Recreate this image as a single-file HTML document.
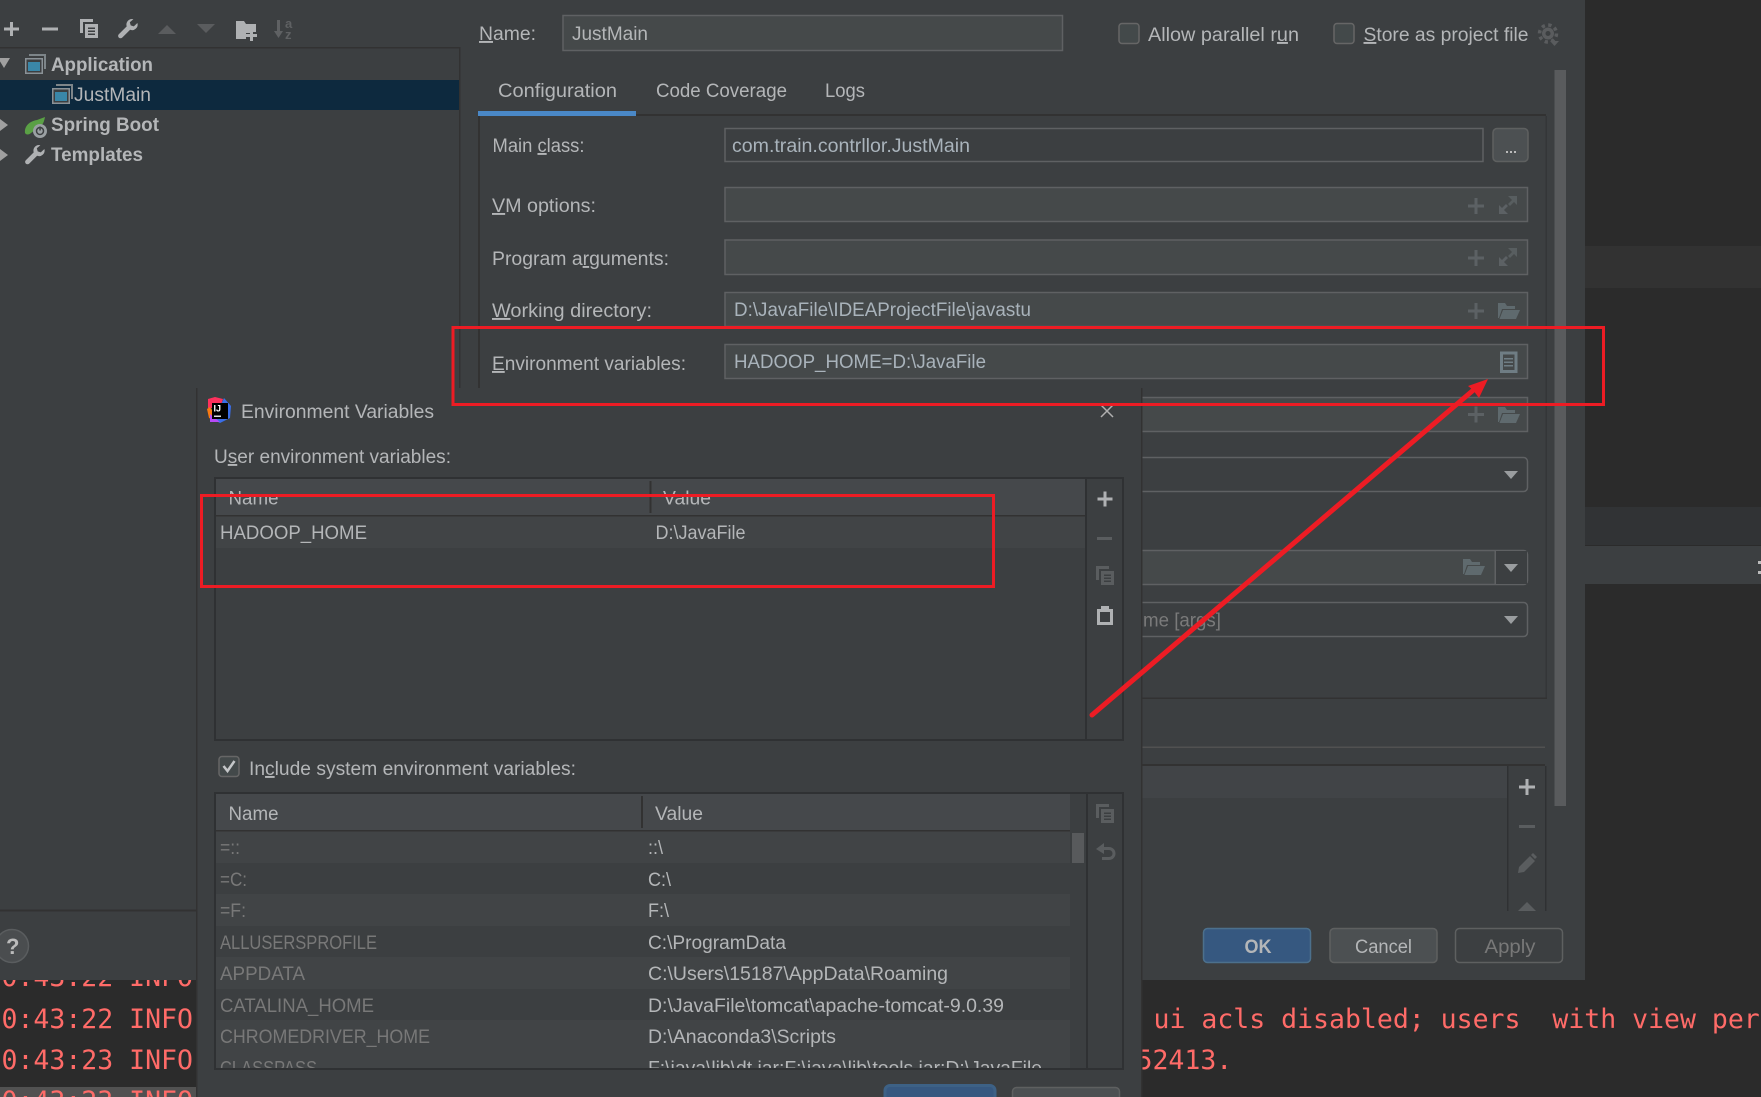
<!DOCTYPE html>
<html><head><meta charset="utf-8"><title>Run Configuration</title>
<style>
html,body{margin:0;padding:0;background:#2b2b2b;width:1761px;height:1097px;overflow:hidden}
svg{display:block;font-family:"Liberation Sans",sans-serif;font-size:19px}
text{fill:#b4b6b8;white-space:pre}
.m{font-family:"DejaVu Sans Mono","Liberation Mono",monospace;font-size:26.5px;fill:#ff6b68}
.b{font-weight:bold}
.v{fill:#a9b3bb}
.d{fill:#787878}
.u{text-decoration:underline}
</style></head><body>
<svg width="1761" height="1097" viewBox="0 0 1761 1097" xmlns="http://www.w3.org/2000/svg">
<defs>
<g id="wrench"><path d="M14 0a5.6 5.6 0 0 0-5.3 7.4L.8 15.2a2.4 2.4 0 0 0 3.4 3.4l7.9-7.8A5.6 5.6 0 0 0 19.4 4l-3.6 3.4-3.1-1-.9-3.1L15.4.2A6 6 0 0 0 14 0z"/></g>
<g id="copy"><path d="M0 0h13v3H3v11H0z"/><path fill-rule="evenodd" d="M5 5h13v14H5zM8 8.500v1.500h7V8.500zM8 11.500V13h7v-1.500zM8 14.500V16h7v-1.500z"/></g>
<g id="folder"><path d="M1 0h7l2 3h8v3H5L2 15H1z"/><path d="M6 7h17l-4 9H2.500z"/></g>
<g id="expand"><path d="M9 0h9v9l-3-3-4 4-2-2 4-4z" opacity=".85"/><path d="M0 18V9l3 3 4-4 2 2-4 4 4 4z"/></g>
<g id="app"><path d="M4 0h17v15h-2V2H4z" fill="#7d8589"/><path d="M0 4h18v16H0z" fill="#8a9297"/><rect x="1.500" y="5.500" width="15" height="13" fill="#3c3f41"/><rect x="3" y="8" width="12" height="9" fill="#3a87a8"/></g>
<g id="arrow"><path d="M-7-4H7L0 4z"/></g>
</defs>

<!-- editor background -->
<rect width="1761" height="1097" fill="#2b2b2b"/>
<rect x="1585" y="246" width="176" height="42" fill="#323232"/>
<rect x="1585" y="507" width="176" height="38" fill="#313335"/>
<rect x="1585" y="546" width="176" height="38" fill="#3c3f41"/>
<rect x="1758" y="561" width="3" height="3" fill="#bbb"/><rect x="1758" y="571" width="3" height="3" fill="#bbb"/>
<rect x="0" y="1087" width="197" height="10" fill="#515151"/>
<text class="m" x="1.500" y="986">0:43:22 INFO</text>
<text class="m" x="1.500" y="1028">0:43:22 INFO</text>
<text class="m" x="1.500" y="1069">0:43:23 INFO</text>
<text class="m" x="1.500" y="1110">0:43:23 INFO</text>
<text class="m" x="1153.500" y="1028">ui acls disabled; users  with view permissions</text>
<text class="m" x="1136.500" y="1069">52413.</text>

<!-- main dialog -->
<rect width="1585" height="980" fill="#3c3f41"/>
<g fill="#afb1b3">
<rect x="4" y="27.500" width="15" height="3"/><rect x="10" y="22" width="3" height="14"/>
<rect x="42" y="27.500" width="16" height="3"/>
<use href="#copy" x="80" y="19"/>
<use href="#wrench" x="118" y="19"/>
<path d="M236 21h8l2 3h10v8h-6v1h-4v6h-10z"/><rect x="246" y="34" width="11" height="3"/><rect x="250" y="30" width="3" height="11"/>
</g>
<path d="M158 34l9-9 9 9zM197 24h18l-9 9z" fill="#5a5c5e"/>
<g fill="#5f6163"><rect x="277" y="20" width="3" height="14"/><path d="M274 31h9l-4.500 7z"/></g>
<text x="285" y="28" font-size="13" class="b" style="fill:#5f6163">a</text><text x="285" y="39" font-size="13" class="b" style="fill:#5f6163">z</text>

<rect x="0" y="47" width="460" height="1.500" fill="#323232"/>
<rect x="459" y="47" width="1.500" height="345" fill="#323232"/>
<rect x="0" y="80" width="459" height="30" fill="#0d293e"/>
<path d="M-2 58h12l-6 10z" fill="#a0a0a0"/>
<path d="M0 119l8 6-8 6zM0 149l8 6-8 6z" fill="#a0a0a0"/>
<use href="#app" x="25" y="54"/><use href="#app" x="52" y="84"/>
<text class="b" x="51" y="71" textLength="102" lengthAdjust="spacingAndGlyphs">Application</text>
<text x="74" y="101" textLength="77" lengthAdjust="spacingAndGlyphs">JustMain</text>
<path d="M25 133c-1-7 5-12 12-13l8-3c-1 5-2 8-6 10l-8 6c-2 2-5 2-6 0z" fill="#5aa045"/>
<circle cx="40" cy="131" r="7" fill="#9aa0a3"/><circle cx="40" cy="131" r="3.500" fill="none" stroke="#3c3f41" stroke-width="1.500"/><rect x="39.300" y="126.500" width="1.500" height="4" fill="#3c3f41"/>
<text class="b" x="51" y="131" textLength="108" lengthAdjust="spacingAndGlyphs">Spring Boot</text>
<use href="#wrench" x="25" y="145" fill="#afb1b3"/>
<text class="b" x="51" y="161" textLength="92" lengthAdjust="spacingAndGlyphs">Templates</text>

<rect x="0" y="909.500" width="197" height="2" fill="#323232"/>
<circle cx="12" cy="946" r="16.500" fill="#4a4d4f" stroke="#5a5d5f" stroke-width="1.500"/>
<text class="b" x="6" y="954" font-size="22" style="fill:#bbb">?</text>

<!-- name row -->
<text x="479" y="40" textLength="57" lengthAdjust="spacingAndGlyphs"><tspan class="u">N</tspan>ame:</text>
<rect x="563" y="15.500" width="499.500" height="35" fill="#45494a" stroke="#5f6163" stroke-width="1.500"/>
<text x="572" y="40" textLength="76" lengthAdjust="spacingAndGlyphs">JustMain</text>
<rect x="1119" y="23.500" width="20" height="20" rx="3" fill="#43494a" stroke="#666" stroke-width="1.500"/>
<text x="1148" y="41" textLength="151" lengthAdjust="spacingAndGlyphs">Allow parallel r<tspan class="u">u</tspan>n</text>
<rect x="1334" y="23.500" width="20" height="20" rx="3" fill="#43494a" stroke="#666" stroke-width="1.500"/>
<text x="1363.500" y="41" textLength="165" lengthAdjust="spacingAndGlyphs"><tspan class="u">S</tspan>tore as project file</text>
<circle cx="1548" cy="33.500" r="6" fill="#5a5c5e"/><circle cx="1548" cy="33.500" r="2.500" fill="#3c3f41"/>
<circle cx="1548" cy="33.500" r="8.500" fill="none" stroke="#5a5c5e" stroke-width="3.500" stroke-dasharray="3.300 3.370"/>
<path d="M1550 41h9l-4.500 5z" fill="#5a5c5e"/>

<!-- tabs -->
<text x="498" y="97" textLength="119" lengthAdjust="spacingAndGlyphs">Configuration</text>
<text x="656" y="97" textLength="131" lengthAdjust="spacingAndGlyphs">Code Coverage</text>
<text x="825" y="97" textLength="40" lengthAdjust="spacingAndGlyphs">Logs</text>
<rect x="636" y="114" width="910" height="2" fill="#323232"/>
<rect x="478" y="111" width="158" height="5" fill="#4a88c7"/>
<rect x="478" y="116" width="2" height="276" fill="#323232"/>
<rect x="1545.500" y="116" width="1.500" height="583" fill="#343638"/>
<rect x="480" y="697.500" width="1067" height="1.500" fill="#323232"/>
<rect x="480" y="746.500" width="1065" height="1.500" fill="#515151"/>
<rect x="1554.500" y="70" width="11.500" height="736" fill="#595b5d"/>

<!-- form -->
<text x="492.500" y="152" textLength="92" lengthAdjust="spacingAndGlyphs">Main <tspan class="u">c</tspan>lass:</text>
<rect x="725" y="128.500" width="758" height="33" fill="#3c3f41" stroke="#5f6163" stroke-width="1.500"/>
<text class="v" x="732" y="152" textLength="238" lengthAdjust="spacingAndGlyphs">com.train.contrllor.JustMain</text>
<rect x="1493" y="128.500" width="35" height="33" rx="4" fill="#4c5052" stroke="#5e6060" stroke-width="1.500"/>
<g fill="#bbb"><rect x="1506" y="151" width="2" height="2"/><rect x="1510" y="151" width="2" height="2"/><rect x="1514" y="151" width="2" height="2"/></g>

<text x="492" y="212" textLength="104" lengthAdjust="spacingAndGlyphs"><tspan class="u">V</tspan>M options:</text>
<rect x="725" y="187.500" width="802.500" height="34" fill="#45494a" stroke="#5f6163" stroke-width="1.500"/>
<text x="492" y="265" textLength="177" lengthAdjust="spacingAndGlyphs">Program a<tspan class="u">r</tspan>guments:</text>
<rect x="725" y="240" width="802.500" height="34.500" fill="#45494a" stroke="#5f6163" stroke-width="1.500"/>
<text x="492" y="317" textLength="160" lengthAdjust="spacingAndGlyphs"><tspan class="u">W</tspan>orking directory:</text>
<rect x="725" y="292.500" width="802.500" height="34" fill="#45494a" stroke="#5f6163" stroke-width="1.500"/>
<text class="v" x="734" y="316" textLength="297" lengthAdjust="spacingAndGlyphs">D:\JavaFile\IDEAProjectFile\javastu</text>
<text x="492" y="370" textLength="194" lengthAdjust="spacingAndGlyphs"><tspan class="u">E</tspan>nvironment variables:</text>
<rect x="725" y="344.500" width="802.500" height="34" fill="#45494a" stroke="#5f6163" stroke-width="1.500"/>
<text class="v" x="734" y="368" textLength="252" lengthAdjust="spacingAndGlyphs">HADOOP_HOME=D:\JavaFile</text>
<rect x="725" y="397.500" width="802.500" height="34" fill="#45494a" stroke="#5f6163" stroke-width="1.500"/>
<rect x="725" y="457.500" width="802.500" height="34" rx="4" fill="#3c3f41" stroke="#5f6163" stroke-width="1.500"/>
<rect x="725" y="550.500" width="802.500" height="34" rx="4" fill="#45494a" stroke="#5f6163" stroke-width="1.500"/>
<path d="M1495 551h32v33H1495z" fill="#3c3f41"/><rect x="1494.500" y="551" width="1.500" height="33" fill="#5f6163"/>
<rect x="725" y="602.500" width="802.500" height="34" rx="4" fill="#3c3f41" stroke="#5f6163" stroke-width="1.500"/>
<text class="d" x="1143" y="626.500" textLength="78" lengthAdjust="spacingAndGlyphs" style="fill:#7a7a7a">me [args]</text>
<g fill="#9a9d9f"><use href="#arrow" x="1511" y="475"/><use href="#arrow" x="1511" y="568"/><use href="#arrow" x="1511" y="620"/></g>
<g fill="#5c6164">
<path d="M1468 204.500h16v3h-16zM1474.500 198h3v16h-3z"/>
<path d="M1468 256.500h16v3h-16zM1474.500 250h3v16h-3z"/>
<path d="M1468 309.500h16v3h-16zM1474.500 303h3v16h-3z"/>
<path d="M1468 413h16v3h-16zM1474.500 406.500h3v16h-3z"/>
<use href="#expand" x="1499" y="196"/><use href="#expand" x="1499" y="248"/>
</g>
<g fill="#5f6a6e"><use href="#folder" x="1497" y="303"/><use href="#folder" x="1497" y="407"/><use href="#folder" x="1462" y="559"/></g>
<rect x="1501.500" y="353" width="14.500" height="18.500" fill="#45494a" stroke="#6f7d84" stroke-width="3"/>
<g fill="#6f7d84"><rect x="1504" y="358" width="9" height="1.500"/><rect x="1504" y="361.500" width="9" height="1.500"/><rect x="1504" y="365" width="9" height="1.500"/></g>

<!-- lower list -->
<rect x="480" y="764" width="1065" height="2" fill="#323232"/>
<rect x="480" y="766" width="1027" height="32" fill="#414447"/>
<rect x="1507" y="766" width="1.500" height="145" fill="#2f3133"/>
<rect x="1545" y="766" width="1.500" height="145" fill="#2f3133"/>
<path d="M1519 785.500h16v3h-16zM1525.500 779h3v16h-3z" fill="#afb1b3"/>
<rect x="1519" y="825" width="16" height="3" fill="#5a5d5f"/>
<path d="M1518 873l1-6 11-11 5 5-11 11zM1531 855l2-2 4 4-2 2z" fill="#5a5d5f"/>
<path d="M1518 911l9-9 9 9z" fill="#5a5d5f"/>

<!-- main buttons -->
<rect x="1203.500" y="928.500" width="107" height="34" rx="4" fill="#365880" stroke="#4c708c" stroke-width="1.500"/>
<text class="b" x="1244.500" y="953" textLength="27" lengthAdjust="spacingAndGlyphs">OK</text>
<rect x="1330" y="928.500" width="107" height="34" rx="4" fill="#4c5052" stroke="#5e6060" stroke-width="1.500"/>
<text x="1355" y="953" textLength="57" lengthAdjust="spacingAndGlyphs">Cancel</text>
<rect x="1455.500" y="928.500" width="107" height="34" rx="4" fill="#3c3f41" stroke="#5e6060" stroke-width="1.500"/>
<text class="d" x="1484.500" y="953" textLength="51" lengthAdjust="spacingAndGlyphs">Apply</text>

<!-- env dialog -->
<rect x="196" y="388" width="946" height="709" fill="#3c3f41"/>
<rect x="196" y="388" width="1.500" height="709" fill="#323232"/>
<rect x="1141" y="388" width="1.500" height="709" fill="#323232"/>

<path d="M208 399l7-2 8 2-3 9h-12z" fill="#fe315d"/>
<path d="M224 398l7 8-1 12-10 5-6-3z" fill="#3a6ee8"/>
<path d="M207 409l3-2 4 6-3 6-2-1z" fill="#f97a12"/>
<path d="M210 414l10 8-10 0z" fill="#b74af7"/>
<rect x="212" y="403" width="16" height="16" fill="#000"/>
<text x="213.500" y="411.500" font-size="9" class="b" style="fill:#fff">IJ</text>
<rect x="214" y="415.500" width="7" height="1.500" fill="#ddd"/>
<text x="241" y="418" textLength="193" lengthAdjust="spacingAndGlyphs">Environment Variables</text>
<path d="M1101 405l12 12M1113 405l-12 12" stroke="#b0b0b0" stroke-width="1.500" fill="none"/>
<text x="214" y="463" textLength="237" lengthAdjust="spacingAndGlyphs">U<tspan class="u">s</tspan>er environment variables:</text>

<!-- user table -->
<rect x="215" y="478" width="908" height="262" fill="#3c3f41" stroke="#2f3133" stroke-width="2"/>
<rect x="216" y="479" width="869" height="36" fill="#45484b"/>
<rect x="216" y="515" width="869" height="1.500" fill="#323232"/>
<rect x="216" y="516.500" width="869" height="31.500" fill="#414446"/>
<rect x="649.500" y="481" width="2" height="32" fill="#323232"/>
<rect x="1085" y="479" width="2" height="260" fill="#2f3133"/>
<text x="228.500" y="504.500" textLength="50" lengthAdjust="spacingAndGlyphs">Name</text>
<text x="663" y="504.500" textLength="48" lengthAdjust="spacingAndGlyphs">Value</text>
<text x="220" y="539" textLength="147" lengthAdjust="spacingAndGlyphs">HADOOP_HOME</text>
<text x="655.500" y="539" textLength="90" lengthAdjust="spacingAndGlyphs">D:\JavaFile</text>
<path d="M1097.500 497.500h15v3h-15zM1103.500 491.500h3v15h-3z" fill="#afb1b3"/>
<rect x="1097" y="537" width="15" height="3" fill="#5a5d5f"/>
<use href="#copy" x="1096" y="566" fill="#5a5d5f"/>
<path fill-rule="evenodd" d="M1097 609h4v-3h8v3h4v16h-16zM1100 612v10h10v-10z" fill="#afb1b3"/>

<!-- include -->
<rect x="219" y="756.500" width="20" height="20" rx="3" fill="#43494a" stroke="#666" stroke-width="1.500"/>
<path d="M223.500 766l4 5 7-10" fill="none" stroke="#c4c6c8" stroke-width="2.500"/>
<text x="249" y="775" textLength="327" lengthAdjust="spacingAndGlyphs">In<tspan class="u">c</tspan>lude system environment variables:</text>

<!-- system table -->
<rect x="215" y="793" width="908" height="276" fill="#3c3f41" stroke="#2f3133" stroke-width="2"/>
<rect x="216" y="794" width="854" height="36" fill="#45484b"/>
<rect x="216" y="830" width="854" height="1.500" fill="#323232"/>
<rect x="216" y="831.500" width="854" height="31.500" fill="#414446"/>
<rect x="216" y="894" width="854" height="32" fill="#414446"/>
<rect x="216" y="957" width="854" height="32" fill="#414446"/>
<rect x="216" y="1020" width="854" height="32" fill="#414446"/>
<rect x="216" y="1052" width="854" height="16" fill="#414446"/>
<rect x="641" y="796" width="2" height="32" fill="#323232"/>
<rect x="1086" y="794" width="2" height="274" fill="#2f3133"/>
<rect x="1072" y="833" width="12" height="30" fill="#585a5c"/>
<text x="228.500" y="820" textLength="50" lengthAdjust="spacingAndGlyphs">Name</text>
<text x="655" y="820" textLength="48" lengthAdjust="spacingAndGlyphs">Value</text>
<text class="d" x="220" y="854" textLength="20" lengthAdjust="spacingAndGlyphs">=::</text>
<text class="d" x="220" y="886" textLength="27" lengthAdjust="spacingAndGlyphs">=C:</text>
<text class="d" x="220" y="917" textLength="26" lengthAdjust="spacingAndGlyphs">=F:</text>
<text class="d" x="220" y="949" textLength="157" lengthAdjust="spacingAndGlyphs">ALLUSERSPROFILE</text>
<text class="d" x="220" y="980" textLength="85" lengthAdjust="spacingAndGlyphs">APPDATA</text>
<text class="d" x="220" y="1012" textLength="154" lengthAdjust="spacingAndGlyphs">CATALINA_HOME</text>
<text class="d" x="220" y="1043" textLength="210" lengthAdjust="spacingAndGlyphs">CHROMEDRIVER_HOME</text>
<text class="d" x="220" y="1074.500" textLength="97" lengthAdjust="spacingAndGlyphs">CLASSPASS</text>
<text x="648" y="854" textLength="15" lengthAdjust="spacingAndGlyphs">::\</text>
<text x="648" y="886" textLength="23" lengthAdjust="spacingAndGlyphs">C:\</text>
<text x="648" y="917" textLength="21" lengthAdjust="spacingAndGlyphs">F:\</text>
<text x="648" y="949" textLength="138" lengthAdjust="spacingAndGlyphs">C:\ProgramData</text>
<text x="648" y="980" textLength="300" lengthAdjust="spacingAndGlyphs">C:\Users\15187\AppData\Roaming</text>
<text x="648" y="1012" textLength="356" lengthAdjust="spacingAndGlyphs">D:\JavaFile\tomcat\apache-tomcat-9.0.39</text>
<text x="648" y="1043" textLength="188" lengthAdjust="spacingAndGlyphs">D:\Anaconda3\Scripts</text>
<text x="648" y="1074.500" textLength="394" lengthAdjust="spacingAndGlyphs">F:\java\lib\dt.jar;F:\java\lib\tools.jar;D:\JavaFile</text>
<rect x="198" y="1068" width="943" height="29" fill="#3c3f41"/>
<rect x="214" y="1068" width="910" height="2" fill="#2f3133"/>
<use href="#copy" x="1096" y="804" fill="#5a5d5f"/>
<path d="M1096 849l8-6v4h5a6.500 6.500 0 0 1 0 13h-7v-3h7a3.500 3.500 0 0 0 0-7h-5v4z" fill="#5a5d5f"/>

<!-- env buttons -->
<rect x="885" y="1085.500" width="110" height="20" rx="5" fill="#365880" stroke="#3d6185" stroke-width="3"/>
<rect x="1012.500" y="1087.500" width="107" height="20" rx="4" fill="#4c5052" stroke="#5e6060" stroke-width="1.500"/>

<!-- annotations -->
<g fill="none" stroke="#ed1c24" stroke-width="3">
<rect x="453" y="327.500" width="1150.500" height="77"/>
<rect x="201.500" y="495.500" width="792" height="91"/>
</g>
<path d="M1092 715L1477 387" stroke="#ed1c24" stroke-width="5" stroke-linecap="round" fill="none"/>
<path d="M1488 379L1468 386 1473 390 1479 398z" fill="#ed1c24"/>
</svg>
</body></html>
